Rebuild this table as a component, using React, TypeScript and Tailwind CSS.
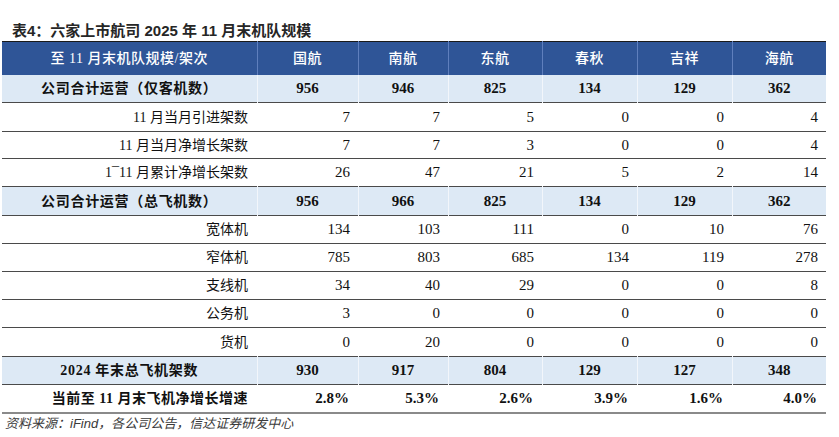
import React from "react";

type Row = {
  label: string;
  values: string[];
  kind: "sum" | "sub" | "pct";
  h: string;
};

const rows: Row[] = [
  { label: "公司合计运营（仅客机数）", values: ["956", "946", "825", "134", "129", "362"], kind: "sum", h: "h-[28px]" },
  { label: "11 月当月引进架数", values: ["7", "7", "5", "0", "0", "4"], kind: "sub", h: "h-[29px]" },
  { label: "11 月当月净增长架数", values: ["7", "7", "3", "0", "0", "4"], kind: "sub", h: "h-[27px]" },
  { label: "1¯11 月累计净增长架数", values: ["26", "47", "21", "5", "2", "14"], kind: "sub", h: "h-[28px]" },
  { label: "公司合计运营（总飞机数）", values: ["956", "966", "825", "134", "129", "362"], kind: "sum", h: "h-[29px]" },
  { label: "宽体机", values: ["134", "103", "111", "0", "10", "76"], kind: "sub", h: "h-[28px]" },
  { label: "窄体机", values: ["785", "803", "685", "134", "119", "278"], kind: "sub", h: "h-[28px]" },
  { label: "支线机", values: ["34", "40", "29", "0", "0", "8"], kind: "sub", h: "h-[28px]" },
  { label: "公务机", values: ["3", "0", "0", "0", "0", "0"], kind: "sub", h: "h-[28px]" },
  { label: "货机", values: ["0", "20", "0", "0", "0", "0"], kind: "sub", h: "h-[29px]" },
  { label: "2024 年末总飞机架数", values: ["930", "917", "804", "129", "127", "348"], kind: "sum", h: "h-[28px]" },
  { label: "当前至 11 月末飞机净增长增速", values: ["2.8%", "5.3%", "2.6%", "3.9%", "1.6%", "4.0%"], kind: "pct", h: "h-[28px]" },
];

const heads = ["国航", "南航", "东航", "春秋", "吉祥", "海航"];
const colW = ["w-[101px]", "w-[90px]", "w-[94px]", "w-[95px]", "w-[95px]", "w-[94px]"];

export default function App() {
  return (
    <div className="w-[839px] h-[437px] bg-white overflow-hidden font-['Liberation_Serif','Noto_Sans_CJK_SC',serif]">
      <div className="pt-[21px] pl-[12px] h-[41px] text-[15px] font-bold text-[#262626] leading-[19px] font-['Liberation_Sans','Noto_Sans_CJK_SC',sans-serif]">
        表4：六家上市航司 2025 年 11 月末机队规模
      </div>
      <table className="ml-[2px] w-[824px] border-collapse table-fixed">
        <thead>
          <tr className="h-[33px] bg-[#2f5597] text-white text-[14px] border-t-[1.5px] border-t-[#1a1a1a]">
            <th className="w-[255px] font-medium text-center border-r border-r-[#5f7fbd] p-0 tracking-[0.5px]">
              至 11 月末机队规模/架次
            </th>
            {heads.map((h, i) => (
              <th
                key={h}
                className={`${colW[i]} font-medium text-center p-0 tracking-[0.5px] ${i < 5 ? "border-r border-r-[#5f7fbd]" : ""}`}
              >
                {h}
              </th>
            ))}
          </tr>
        </thead>
        <tbody>
          {rows.map((r, ri) => {
            const last = ri === rows.length - 1;
            const bg = r.kind === "sum" ? "bg-[#dde9f5]" : "bg-white";
            const border = last ? "border-b-2 border-b-[#8a8a8a]" : "border-b border-b-[#4a4a4a]";
            return (
              <tr key={ri} className={`${bg} ${border} ${r.h} text-[#111]`}>
                <td
                  className={`p-0 text-[14px] ${
                    r.kind === "sum"
                      ? "font-bold text-center tracking-[0.7px] border-r border-r-[#f2f6fb]"
                      : r.kind === "pct"
                      ? "font-bold text-right pr-[9px] tracking-[0.5px]"
                      : "text-right pr-[9px]"
                  }`}
                >
                  {r.label}
                </td>
                {r.values.map((v, i) => (
                  <td
                    key={i}
                    className={`p-0 text-[15px] ${
                      r.kind === "sum"
                        ? `font-bold text-center ${i < 5 ? "border-r border-r-[#f2f6fb]" : ""}`
                        : r.kind === "pct"
                        ? "font-bold text-right pr-[9px]"
                        : "text-right pr-[8px]"
                    }`}
                  >
                    {v}
                  </td>
                ))}
              </tr>
            );
          })}
        </tbody>
      </table>
      <div className="pl-[5px] pt-[1px] text-[13px] italic text-[#3a3a3a] leading-[18px] font-['Liberation_Sans','Noto_Sans_CJK_SC',sans-serif]">
        资料来源：iFind，各公司公告，信达证券研发中心
      </div>
    </div>
  );
}
